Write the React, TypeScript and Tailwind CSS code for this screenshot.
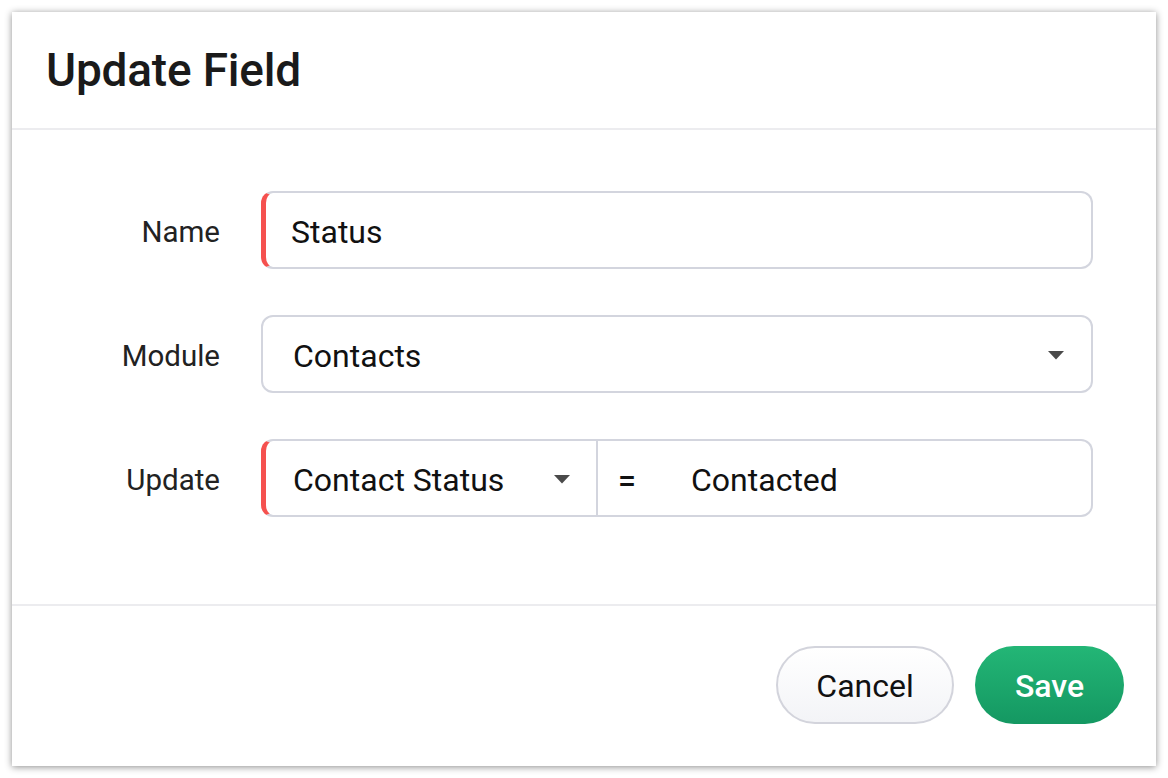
import { ReactNode } from "react";

function Caret() {
  return (
    <svg width="16" height="9" viewBox="0 0 16 9" className="shrink-0">
      <path d="M0 0 H16 L8 8.5 Z" fill="#4a4a4a" />
    </svg>
  );
}

function Row({ label, children }: { label: string; children: ReactNode }) {
  return (
    <div className="flex items-center">
      <div className="w-[208px] pt-[4px] text-right text-[29.5px] text-[#222]">{label}</div>
      <div className="ml-[41px] flex-1">{children}</div>
    </div>
  );
}

export default function App() {
  return (
    <div className="min-h-screen bg-white p-[12px] font-['Roboto',sans-serif]">
      <div className="flex h-[754px] w-[1144px] flex-col bg-white shadow-[0_1px_7px_rgba(0,0,0,0.45)]">
        {/* 헤더 */}
        <div className="flex h-[118px] shrink-0 items-center border-b-2 border-[#ececef] pl-[34px]">
          <h1 className="text-[46px] font-medium tracking-[-0.2px] text-[#1a1a1a]">Update Field</h1>
        </div>

        {/* 본문 */}
        <div className="flex flex-1 flex-col gap-[46px] pr-[63px] pt-[61px]">
          <Row label="Name">
            <div className="flex h-[78px] items-center rounded-[12px] border-2 border-l-[5px] border-[#d3d5de] border-l-[#f5514f] pl-[25px] pt-[3px] text-[32px] text-[#111]">
              Status
            </div>
          </Row>
          <Row label="Module">
            <div className="flex h-[78px] items-center justify-between rounded-[12px] border-2 border-[#d3d5de] pl-[30px] pr-[27px] pt-[3px] text-[32px] text-[#111]">
              <span>Contacts</span>
              <Caret />
            </div>
          </Row>
          <Row label="Update">
            <div className="flex h-[78px] items-stretch rounded-[12px] border-2 border-l-[5px] border-[#d3d5de] border-l-[#f5514f] text-[32px] text-[#111]">
              <div className="flex w-[332px] items-center justify-between border-r-2 border-[#d3d5de] pl-[27px] pr-[26px] pt-[3px]">
                <span>Contact Status</span>
                <Caret />
              </div>
              <div className="flex items-center pl-[20px] pt-[3px]">
                <span className="w-[73px] font-medium">=</span>
                <span>Contacted</span>
              </div>
            </div>
          </Row>
        </div>

        {/* 하단 버튼 */}
        <div className="flex h-[162px] shrink-0 items-center justify-end gap-[21px] border-t-2 border-[#ececef] pr-[32px] pb-[2px]">
          <button className="h-[78px] w-[178px] rounded-full border-2 border-[#d3d4dc] bg-gradient-to-b from-white to-[#f3f4f7] pt-[2px] text-[32px] text-[#111]">
            Cancel
          </button>
          <button className="h-[78px] w-[149px] rounded-full bg-gradient-to-b from-[#23b676] to-[#149862] pt-[2px] text-[32px] font-medium text-white">
            Save
          </button>
        </div>
      </div>
    </div>
  );
}
